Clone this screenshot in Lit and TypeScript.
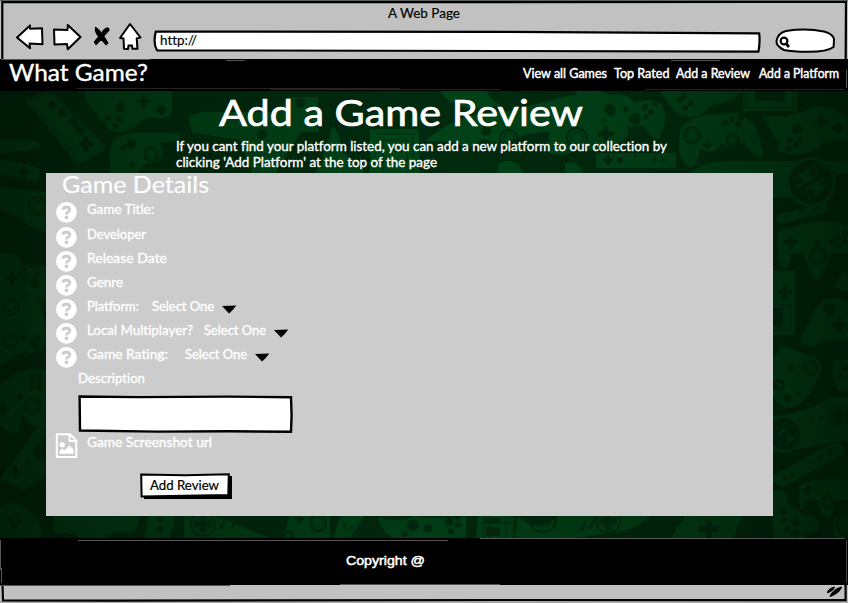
import { LitElement, html, svg, css } from "lit";
import { customElement, property } from "lit/decorators.js";

/** One line of text set to an exact measure. */
@customElement("sketch-text")
class SketchText extends LitElement {
  @property() text = "";
  @property({ type: Number }) width = 100;
  @property({ type: Number }) size = 13;

  static styles = css`
    :host { display: block; flex: none; }
    svg { display: block; overflow: visible; }
    text {
      font-family: var(--face, Lato), "Open Sans", sans-serif;
      font-weight: 400;
      font-variant-ligatures: none;
      fill: currentColor;
      stroke: currentColor;
      stroke-width: var(--ink, 0.35px);
    }
  `;

  render() {
    return html`<svg width=${this.width} height=${this.size * 1.2}>
      <text x="0" y=${this.size} font-size=${this.size}
        textLength=${this.width} lengthAdjust="spacingAndGlyphs">${this.text}</text>
    </svg>`;
  }
}

/** Green wallpaper of controllers and handhelds. */
@customElement("game-wallpaper")
class GameWallpaper extends LitElement {
  static styles = css`
    :host { display: block; }
    svg { display: block; width: 100%; height: 100%; }
    .base { fill: #002a0e; }
    .body { fill: #004318; }
    .dark { fill: #002b0f; }
    .ring { fill: none; stroke: #00290e; stroke-width: 2; }
    .thin { fill: none; stroke: #00290e; stroke-width: 1; }
  `;

  bodies = [
    "M25 99L52 91L107 148L78 165Z",
    "M84 91H172V108Q171 121 158 118Q146 115 134 127Q122 135 108 129Q99 124 97 113Q86 106 84 91Z",
    "M110 173V150Q113 133 135 133L176 133Q184 136 178 140L160 143Q166 156 155 162Q141 163 138 173Z",
    "M0 140Q36 137 41 145Q40 151 0 153Z",
    "M0 159L38 167Q42 170 38 182L0 174Z",
    "M0 187Q20 190 46 192V232Q30 229 20 218L0 208Z",
    "M0 255Q15 249 22 264L46 266V300H0Z",
    "M0 294Q26 286 40 305Q48 325 46 345Q35 358 22 351L0 366Z",
    "M0 383Q26 366 46 370V426Q28 428 24 415Q18 421 20 432Q8 436 0 424Z",
    "M46 421V475L25 490L0 480Q18 455 40 424Z",
    "M0 507Q10 500 23 506Q36 515 42 530L40 538H0Z",
    "M53 516H138Q140 530 131 533Q118 527 105 538H80Q67 531 55 534Z",
    "M148 516H176L170 538H145Z",
    "M184 516Q210 510 238 525L270 538H184Z",
    "M289 516H330V538H284Z",
    "M341 516H364L350 538H333Z",
    "M377 517Q401 524 413 516Q446 520 466 516V538H392Q382 530 377 517Z",
    "M478 516H513V538H476Z",
    "M518 516Q538 535 558 516L650 516Q636 530 611 533L575 538H515Z",
    "M685 516H743L733 538H671Z",
    "M772 516H814Q821 522 817 527H802L805 538H774Z",
    "M188 118L200 112H278L286 100L300 133L275 173H252L240 140L192 133Z",
    "M288 97H318V132H288Z",
    "M370 129H419V173H370Z",
    "M425 141Q460 110 505 112L548 101Q580 91 595 97Q588 109 607 117L580 132Q535 129 515 139Q500 147 482 138Q470 153 456 142Z",
    "M440 91H487Q492 102 501 105Q480 111 465 107Q448 104 440 91Z",
    "M320 166L333 126Q340 133 342 151L365 173H315Z",
    "M498 166Q510 156 520 173H498Z",
    "M575 91Q596 88 610 95Q627 91 635 103Q652 96 662 105Q669 119 661 133Q658 145 651 135L642 125Q627 129 612 122L587 113Z",
    "M550 130Q585 118 621 121Q636 130 621 142Q599 154 575 149Q563 160 547 151Z",
    "M660 91H744L729 101Q711 103 703 113Q690 121 675 112Z",
    "M743 91H797V111H743Z",
    "M681 128Q692 113 725 114Q744 110 755 127Q765 149 762 157Q753 157 744 142Q732 151 721 143Q714 157 700 148Q700 164 690 168Q674 158 681 128Z",
    "M762 116Q790 119 815 106Q839 106 848 121V142Q828 136 818 148Q802 158 780 152Q774 130 762 116Z",
    "M596 153H676V168H596Z",
    "M501 162Q517 157 523 173H501Z",
    "M565 173V164Q576 158 583 173Z",
    "M690 173Q708 160 730 161H848V174Z",
    "M773 172H792V197H773Z",
    "M777 215L826 203Q830 208 827 213L780 223Q775 219 777 215Z",
    "M779 230Q798 228 810 222H834L848 226V253H831Q824 270 818 280Q810 278 804 253H791Q790 270 783 267Q775 258 779 230Z",
    "M773 271H795V335H773Z",
    "M801 338L816 308Q824 296 840 298L848 303V341H824L811 347Q800 346 801 338Z",
    "M834 287L842 272L848 275V291Z",
    "M780 348Q781 345 791 349L815 357Q825 365 819 375Q805 406 792 408Q778 407 773 395V360Z",
    "M834 360H848V391H838Q831 376 834 360Z",
    "M773 416Q804 414 828 398L848 397V440L801 448Q782 454 773 451Z",
    "M773 476L832 443Q844 443 846 453L785 486Q775 489 773 476Z",
    "M799 486Q811 477 848 480V500L835 501Q832 520 826 519Q820 513 817 500H806Q804 511 800 510Z",
    "M773 491Q790 487 787 503Q799 512 815 521Q824 525 814 533L780 535Q773 526 773 510Z",
    "M834 540V521Q839 513 848 514V540Z",
  ];

  crosses = [
    [144, 101, 7], [86, 144, 8], [11, 128, 6], [24, 172, 6], [12, 278, 7], [3, 409, 6], [15, 472, 7],
    [203, 524, 9], [299, 519, 5], [608, 521, 9], [709, 529, 10], [431, 98, 7], [365, 103, 6], [606, 134, 8],
    [608, 160, 5], [707, 145, 5], [821, 122, 7], [837, 155, 6], [791, 242, 7], [785, 292, 7], [839, 325, 7],
    [791, 368, 5], [839, 415, 7], [831, 452, 4], [808, 491, 5], [795, 533, 5],
  ];

  dots = [
    [120, 107, 5], [161, 110, 5], [108, 118, 3], [115, 126, 3], [103, 124, 3], [119, 119, 3], [53, 105, 4], [62, 112, 4],
    [131, 144, 5], [123, 148, 3], [132, 165, 3], [36, 237, 3], [42, 244, 3], [25, 297, 2], [24, 338, 3],
    [32, 343, 4], [38, 338, 3], [37, 348, 3], [32, 376, 3], [39, 376, 3], [32, 382, 3], [39, 382, 3], [31, 388, 3],
    [39, 388, 3], [20, 397, 3], [35, 284, 4], [17, 515, 3], [11, 519, 3], [20, 521, 3], [14, 525, 3],
    [160, 520, 3], [160, 529, 3], [345, 525, 2], [352, 528, 2], [361, 529, 2], [413, 525, 6], [428, 528, 4],
    [449, 522, 4], [457, 518, 3], [458, 525, 3], [451, 531, 3], [405, 534, 3], [300, 103, 5], [262, 134, 5],
    [486, 131, 5], [610, 110, 6], [626, 109, 3], [635, 119, 6], [645, 107, 3], [651, 112, 3], [646, 117, 3],
    [655, 104, 3], [680, 100, 3], [685, 108, 3], [691, 103, 3], [684, 96, 3], [620, 160, 3], [635, 157, 1], [635, 164, 1],
    [655, 160, 2], [663, 160, 2], [725, 123, 3], [732, 119, 3], [738, 124, 3], [741, 118, 3], [797, 129, 5],
    [790, 140, 3], [796, 145, 3], [789, 149, 3], [800, 139, 3], [838, 128, 5], [817, 243, 3], [832, 242, 3],
    [838, 237, 3], [845, 233, 3], [839, 246, 3], [845, 241, 3], [786, 217, 2], [801, 212, 2], [814, 210, 2],
    [819, 209, 2], [830, 309, 6], [787, 398, 4], [797, 393, 2], [797, 384, 1], [840, 376, 3], [845, 368, 3],
    [778, 427, 4], [791, 430, 4], [784, 439, 4], [820, 458, 3], [810, 463, 2], [807, 461, 1], [809, 468, 1],
    [793, 475, 2], [785, 478, 2], [783, 511, 4], [796, 523, 4], [784, 520, 3], [788, 529, 3], [829, 492, 2],
  ];

  rings = [
    [6, 106, 8], [11, 128, 10], [151, 154, 7], [38, 206, 9], [11, 307, 8], [10, 341, 7], [32, 406, 8],
    [203, 524, 12], [318, 523, 8], [608, 521, 12], [543, 519, 13], [260, 519, 13], [692, 135, 8], [733, 140, 6],
    [577, 138, 10], [509, 139, 9], [818, 256, 8], [810, 368, 7], [779, 385, 5],
    [839, 415, 9], [828, 502, 6], [848, 525, 11], [205, 91, 20], [288, 536, 5], [30, 272, 9],
  ];

  /** Round button clusters: two slanted pairs on a dark disc. */
  discs = [[811, 182, 22], [784, 434, 16]];

  render() {
    return html`<svg viewBox="0 91 848 447" preserveAspectRatio="none">
      <defs>
        <linearGradient id="sides">
          <stop offset="0" stop-color="#000e02" stop-opacity=".62" />
          <stop offset=".25" stop-color="#001203" stop-opacity=".24" />
          <stop offset=".5" stop-color="#001203" stop-opacity="0" />
          <stop offset=".75" stop-color="#001203" stop-opacity=".18" />
          <stop offset="1" stop-color="#000e02" stop-opacity=".62" />
        </linearGradient>
        <linearGradient id="foot" x2="0" y2="1">
          <stop offset=".7" stop-color="#001203" stop-opacity="0" />
          <stop offset="1" stop-color="#001203" stop-opacity=".15" />
        </linearGradient>
      </defs>
      <rect class="base" y="91" width="848" height="447" />
      ${this.bodies.map((d) => svg`<path class="body" d=${d} />`)}
      ${this.discs.map(([x, y, r]) => svg`
        <circle cx=${x} cy=${y} r=${r + 3} fill="#004318" />
        <circle class="dark" cx=${x} cy=${y} r=${r} />
        <g stroke="#004318" stroke-width=${r * 0.5} stroke-linecap="round">
          <path d="M${x - r * 0.55} ${y - r * 0.05}L${x + r * 0.1} ${y - r * 0.45}M${x - r * 0.05} ${y + r * 0.5}L${x + r * 0.55} ${y + r * 0.05}" />
        </g>
        ${[[-0.55, -0.05], [0.1, -0.45], [-0.05, 0.5], [0.55, 0.05]].map(([a, b]) => svg`<circle class="dark" cx=${x + r * a} cy=${y + r * b} r=${r * 0.18} />`)}`)}
      ${this.rings.map(([x, y, r]) => svg`<circle class="ring" cx=${x} cy=${y} r=${r} /><circle class="thin" cx=${x} cy=${y} r=${r * 0.6} />`)}
      ${this.dots.map(([x, y, r]) => svg`<circle class="dark" cx=${x} cy=${y} r=${r} />`)}
      ${this.crosses.map(([x, y, r]) => svg`<path class="dark" d="M${x - r} ${y - r * 0.3}h${r * 0.7}v${-r * 0.7}h${r * 0.6}v${r * 0.7}h${r * 0.7}v${r * 0.6}h${-r * 0.7}v${r * 0.7}h${-r * 0.6}v${-r * 0.7}h${-r * 0.7}z" />`)}
      <path class="thin" d="M29 99L52 93L103 147L79 161ZM376 134H413V173M383 173V140H407V173M746 91V108H793V91M773 305H791V330H773M26 464L46 429M28 462L46 470M480 523H511M484 516V538M490 516V538M506 516V538" />
      <path class="dark" d="M755 91H785V101H755ZM773 308H783V327H773ZM32 455L46 434V463ZM486 518H500V523H486ZM486 527H500V536H486ZM68 121L73 117L85 132L80 136ZM219 528l6-10 2 1-5 10zM230 528l6-10 2 1-5 10zM579 531l6-10 2 1-5 10zM588 528l6-10 2 1-5 10zM13 489h10v2H13ZM28 489h10v2H28ZM27 496h2v9h-2ZM32 496h2v9h-2ZM37 496h2v9h-2ZM807 424l5-5 2 1-5 5zM818 421l5-5 2 1-5 5z" />
      <rect y="91" width="848" height="447" fill="url(#sides)" />
      <rect y="91" width="848" height="447" fill="url(#foot)" />
    </svg>`;
  }
}

@customElement("app-root")
class AppRoot extends LitElement {
  static styles = css`
    :host { display: block; width: 848px; height: 603px; overflow: hidden; background: #a5a8a5; }
    svg { display: block; flex: none; overflow: visible; }
    .page { display: flex; flex-direction: column; height: 603px; position: relative; }
    .chrome { height: 59px; background: #c1c1c1; color: #000; display: flex; flex-direction: column; --ink: 0.15px; }
    .title { height: 24px; padding: 5px 0 0 388px; box-sizing: border-box; }
    .tools { display: flex; height: 32px; align-items: flex-start; }
    .url { font-family: Lato, sans-serif; font-variant-ligatures: none; }
    .top { height: 32px; background: #000; color: #fff; display: flex; justify-content: space-between; padding: 0 9px; }
    .brand { margin-top: -1px; }
    nav { display: flex; padding-top: 6px; --ink: 0.45px; }
    .g1 { margin-left: 6.5px; } .g2 { margin-left: 7px; } .g3 { margin-left: 9px; }
    main { height: 447px; position: relative; }
    game-wallpaper { position: absolute; inset: 0; }
    .content { position: relative; color: #fff; display: flex; flex-direction: column; }
    .heading { padding-left: 219px; height: 47px; --ink: 0.7px; }
    .heading sketch-text { margin-top: -3px; }
    .intro { padding-left: 176px; height: 35px; display: flex; flex-direction: column; gap: 0.4px; }
    .panel { margin-left: 46px; width: 727px; height: 343px; background: #ccc; display: flex; flex-direction: column; }
    .legend { height: 27px; padding-left: 16px; --ink: 0.15px; }
    .legend sketch-text { margin-top: -3.5px; }
    .row { display: flex; height: 24px; align-items: flex-start; padding-left: 10px; }
    .row.first { height: 25px; }
    .row sketch-text { margin-top: 1px; }
    .icon { margin-right: 10px; }
    .description { height: 26px; padding: 1px 0 0 32px; box-sizing: border-box; }
    .box { margin-left: 32px; }
    .file { height: 40px; }
    .button { margin-left: 94px; width: 92px; height: 26px; display: grid; }
    .button > * { grid-area: 1 / 1; }
    .button sketch-text { color: #000; padding: 4px 0 0 10px; --ink: 0.2px; }
    .foot { height: 47px; background: #000; color: #fff; padding: 14px 0 0 346px; box-sizing: border-box; --ink: 0.5px; --face: "Liberation Sans"; }
    .status { height: 16px; background: #c1c1c1; }
    .frame { position: absolute; inset: 0; pointer-events: none; }
  `;

  text(t: string, w: number, size = 13, cls = "") {
    return html`<sketch-text class=${cls} .text=${t} .width=${w} .size=${size}></sketch-text>`;
  }

  help() {
    return html`<svg class="icon" width="21" height="24" viewBox="0 0 21 24">
      <circle cx="10.4" cy="12.3" r="10.4" fill="#fff" />
      <path d="M6.8 9.7Q7.5 7.1 10.3 7Q13.7 7.1 13.7 9.8Q13.7 11.4 11.8 12.3Q10.4 12.9 10.4 14.4" fill="none" stroke="#ccc" stroke-width="2.8" />
      <rect x="8.7" y="15.7" width="3.5" height="3.3" rx=".8" fill="#ccc" />
    </svg>`;
  }

  field(label: string, width: number, gap = 0, first = false) {
    return html`<div class="row ${first ? "first" : ""}">
      ${this.help()}${this.text(label, width)}
      ${gap
        ? html`<svg width=${gap} height="1"></svg>${this.text("Select One", 62, 12.5)}
            <svg width="22" height="20"><path d="M8 9L22.3 8.6L18.5 13.2L15 16.6Z" fill="#000" /></svg>`
        : ""}
    </div>`;
  }

  render() {
    return html`<div class="page">
      <header class="chrome">
        <div class="title">${this.text("A Web Page", 72, 12.5)}</div>
        <div class="tools">
          <svg width="848" height="32" viewBox="0 24 848 32" fill="#fff" stroke="#000" stroke-width="2" stroke-linejoin="round">
            <path d="M17 37.5L30 25.4V28.8L42 28.3L42.5 44.2L29.5 43.5L30 48.3Z" />
            <path d="M54 29.5L67.5 30L67.8 25L80.5 37L67.8 49.3L67 44L54.5 44.5Z" />
            <path d="M95.7 27.5Q101 31 101.2 35Q103 29 108 28L109 30L103.5 36L107.8 43L106 44.5L101.2 39L96 44.5L94.5 42L99 36.5Q94.5 32 95.7 27.5Z" fill="#000" stroke-width="1.4" />
            <path d="M130 24L140.5 37.5L136.7 38.4L137.5 48.8H132.5L132 45.5H128.5L128 49L124 48.7L123.5 38.5L120 38Z" />
            <path d="M155.8 31.6L500 31.8L759.2 33.3Q760.2 42 758.5 51.6L500 51L157 50.3Q152.8 43 155.8 31.6Z" stroke-width="2.2" />
            <path d="M786 31Q806 28 824 31.5Q833 34 834 39L833.6 47Q827 52 807 51.8Q792 51.8 784 50Q776 46 776.5 41Q778 33 786 31Z" />
            <circle cx="784" cy="41" r="3.4" fill="none" stroke-width="2.2" />
            <path d="M786 43.5L789 47" fill="none" stroke-width="2.8" />
            <text class="url" x="160" y="45" font-size="12.5" textLength="37" lengthAdjust="spacingAndGlyphs" fill="#000" stroke-width=".15">http://</text>
          </svg>
        </div>
      </header>
      <div class="top">
        <div class="brand">${this.text("What Game?", 139, 22.5)}</div>
        <nav>
          ${this.text("View all Games", 84, 12.7)}
          ${this.text("Top Rated", 55.5, 12.7, "g1")}
          ${this.text("Add a Review", 74, 12.7, "g2")}
          ${this.text("Add a Platform", 80, 12.7, "g3")}
        </nav>
      </div>
      <main>
        <game-wallpaper></game-wallpaper>
        <div class="content">
          <div class="heading">${this.text("Add a Game Review", 364, 37.5)}</div>
          <div class="intro">
            ${this.text("If you cant find your platform listed, you can add a new platform to our collection by", 491)}
            ${this.text("clicking 'Add Platform' at the top of the page", 261)}
          </div>
          <section class="panel">
            <div class="legend">${this.text("Game Details", 147, 22.5)}</div>
            ${this.field("Game Title:", 67, 0, true)}
            ${this.field("Developer", 59)}
            ${this.field("Release Date", 80)}
            ${this.field("Genre", 36)}
            ${this.field("Platform:", 52, 13)}
            ${this.field("Local Multiplayer?", 106, 11)}
            ${this.field("Game Rating:", 81, 17)}
            <div class="description">${this.text("Description", 67)}</div>
            <svg class="box" width="215" height="38">
              <path d="M1.6 1.5L60 2.1L150 1.6L213 2.3L213.6 20L213 36.8L150 36.2L80 36.6L2 35.5Z" fill="#fff" stroke="#000" stroke-width="2.4" />
            </svg>
            <div class="row file">
              <svg class="icon" width="21" height="25" fill="none" stroke="#fff" stroke-width="2">
                <path d="M.8 1.3H14L20.3 7.6V24H.8ZM13.5 1.3V8H20.3" stroke-linejoin="round" />
                <circle cx="6.2" cy="11.8" r="2.7" fill="#fff" stroke="none" />
                <path d="M3.5 20.8V18.3L6.5 15.5L8.5 17.5L13.5 12.5L17.6 16.6V20.8Z" fill="#fff" stroke="none" />
              </svg>
              ${this.text("Game Screenshot url", 125)}
            </div>
            <div class="button">
              <svg width="92" height="26">
                <path d="M4 4L92 3V26L4 26Z" fill="#000" />
                <path d="M1.2 1.6L45 2.3L88.8 1.3L88.3 22L45 22.8L1.6 23.5Z" fill="#fff" stroke="#000" stroke-width="2" />
              </svg>
              ${this.text("Add Review", 69)}
            </div>
          </section>
        </div>
      </main>
      <footer class="foot">${this.text("Copyright @", 79)}</footer>
      <div class="status"></div>
      <svg class="frame" width="848" height="603" fill="none" stroke="#000">
        <path d="M2.3 59V2L400 2.2L846 1.8L845.7 59M2.5 585L3 600.3L110 600.6L500 600L845.6 600.2L845.6 585" stroke-width="2.2" />
        <path d="M0 .5H848" stroke="#59615b" />
        <path d="M1 59.5H150M0 585.5H230M340 584.5H500" stroke="#555" />
        <path d="M226 60.5H245M671 60.5H720M226 540.5H340M480 538.5H845M300 540.5H448M1.5 568V583M.5 540V570M846.5 70V88M78 540.5H226" stroke="#555" />
        <path d="M77 88.5H400M645 89.5H845M270 89.5H500" stroke="#242424" />
        <path d="M846.5 540V583" stroke="#444" />
        <path d="M827.8 592.3Q830 588.5 834 587.5Q832 591 827.8 592.3ZM830.5 596Q834 589.5 841 587.5Q838 593 830.5 596Z" fill="#000" stroke-width="1.8" stroke-linejoin="round" />
      </svg>
    </div>`;
  }
}
